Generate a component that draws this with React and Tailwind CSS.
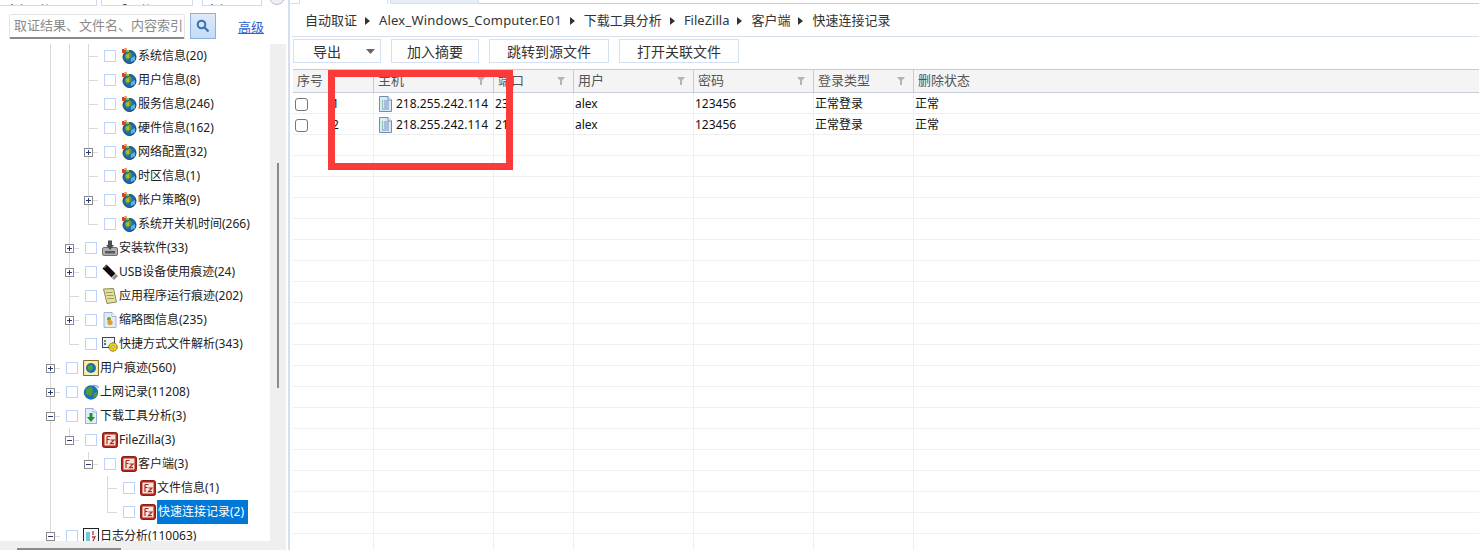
import React from "react";

const FONT = "font-['Noto_Sans','Noto_Sans_CJK_SC',sans-serif]";

function Globe() {
  return (
    <svg width="16" height="16" viewBox="0 0 16 16" className="shrink-0">
      <circle cx="8.5" cy="9" r="6.5" fill="#1f6bb0" stroke="#143f68" strokeWidth="1" />
      <path d="M4 7 L8 4 L11 6 L10 9 L7 12 L4 10 Z" fill="#4ea82c" />
      <path d="M10 10 L14 8 L14 12 L10 14 Z" fill="#5cb4ec" />
      <path d="M5 7 L8 6 L8 10 L6 10 Z" fill="#eda51f" />
      <rect x="1" y="1" width="4" height="4" fill="#d4452e" />
      <rect x="3" y="0" width="3" height="2" fill="#f0a080" />
      <rect x="5" y="2" width="3" height="2" fill="#7fc040" />
    </svg>
  );
}
function FileZilla() {
  return (
    <svg width="16" height="16" viewBox="0 0 16 16" className="shrink-0">
      <rect x="0.5" y="0.5" width="15" height="15" rx="2" fill="#b3261c" stroke="#8c1c14" />
      <rect x="2.5" y="2.5" width="11" height="11" fill="#f6e6de" />
      <path d="M5 4.5 H8.5 M5 4.5 V12 M5 7.5 H7.5 M8.5 8 H12 L8.5 11.7 H12" stroke="#b3261c" strokeWidth="1.2" fill="none" />
    </svg>
  );
}
function Install() {
  return (
    <svg width="16" height="16" viewBox="0 0 16 16" className="shrink-0">
      <rect x="0.5" y="7.5" width="15" height="8" rx="1.5" fill="#b0b0b0" stroke="#555" strokeWidth="0.8" />
      <rect x="3" y="11" width="10" height="2.5" fill="#5a5a5a" />
      <path d="M6 0.5 H10 V5 H12 L8 10 L4 5 H6 Z" fill="#4d4d4d" />
    </svg>
  );
}
function Usb() {
  return (
    <svg width="16" height="16" viewBox="0 0 16 16" className="shrink-0">
      <path d="M4.5 0.5 L0.5 4.5 L9.5 13.5 L13.5 9.5 Z" fill="#0c0c0c" />
      <path d="M10 14 L14 10 L16 12 L12 16 Z" fill="#8a8a8a" />
      <path d="M2 4 L5 1.8" stroke="#8a8a8a" strokeWidth="0.9" />
    </svg>
  );
}
function Note() {
  return (
    <svg width="16" height="16" viewBox="0 0 16 16" className="shrink-0">
      <path d="M1.5 1 L11.5 0.5 L14.5 14 L5 15.5 Z" fill="#e3e09a" stroke="#7c7c4a" strokeWidth="0.9" />
      <path d="M4 4.5 H10.5 M4.5 7.5 H11.5 M5.5 10.5 H12" stroke="#98985a" strokeWidth="0.9" />
    </svg>
  );
}
function Thumb() {
  return (
    <svg width="16" height="16" viewBox="0 0 16 16" className="shrink-0">
      <path d="M2 0.5 H10 L14 4.5 V15.5 H2 Z" fill="#e2eafa" stroke="#8fa6cc" strokeWidth="0.8" />
      <path d="M10 0.5 V4.5 H14" fill="#fff" stroke="#8fa6cc" strokeWidth="0.8" />
      <circle cx="7" cy="7" r="2" fill="#6fa82a" />
      <circle cx="8" cy="10.5" r="2.6" fill="#e0a030" />
    </svg>
  );
}
function Shortcut() {
  return (
    <svg width="16" height="16" viewBox="0 0 16 16" className="shrink-0">
      <rect x="0.5" y="1.5" width="12" height="10" fill="#eef3fa" stroke="#334" strokeWidth="0.9" />
      <rect x="2" y="4" width="2" height="2" fill="#50a050" />
      <rect x="2" y="7" width="2" height="2" fill="#4070c0" />
      <circle cx="11" cy="11" r="4.2" fill="#f2d400" stroke="#444" strokeWidth="0.8" strokeDasharray="2 0.6" />
      <circle cx="11" cy="11" r="1.3" fill="#fff" stroke="#555" strokeWidth="0.5" />
    </svg>
  );
}
function UserTrace() {
  return (
    <svg width="16" height="16" viewBox="0 0 16 16" className="shrink-0">
      <rect x="0.5" y="0.5" width="15" height="15" rx="1" fill="#f8f0b8" stroke="#8a6a20" strokeWidth="1.2" />
      <circle cx="8" cy="8" r="5" fill="#1f6fb0" />
      <path d="M5 6 L9 5 L10 8 L7 11 L5 9 Z" fill="#4fa434" />
    </svg>
  );
}
function WebGlobe() {
  return (
    <svg width="16" height="16" viewBox="0 0 16 16" className="shrink-0">
      <circle cx="8" cy="8.5" r="7.2" fill="#1f70bc" />
      <path d="M3 5 L8 2.5 L10 6 L8 12 L3 10 Z" fill="#4f9e32" />
      <path d="M10.5 9 L14.5 8 L13.5 12 L10.5 14 Z" fill="#4f9e32" />
      <path d="M10 1.5 Q14 1 15.5 4" stroke="#7aa8d8" strokeWidth="1.2" fill="none" />
    </svg>
  );
}
function Download() {
  return (
    <svg width="16" height="16" viewBox="0 0 16 16" className="shrink-0">
      <path d="M2.5 0.5 H10 L13.5 4 V15.5 H2.5 Z" fill="#e2ecfa" stroke="#8fa6cc" strokeWidth="0.9" />
      <path d="M10 0.5 V4 H13.5" fill="#fff" stroke="#8fa6cc" strokeWidth="0.8" />
      <path d="M6.5 5 H9.5 V9 H12 L8 14 L4 9 H6.5 Z" fill="#1a9628" />
    </svg>
  );
}
function LogIcon() {
  return (
    <svg width="16" height="16" viewBox="0 0 16 16" className="shrink-0">
      <rect x="0.5" y="0.5" width="15" height="15" fill="#f4f8ff" stroke="#222" />
      <rect x="3" y="4" width="4" height="9" fill="#70c8d8" />
      <path d="M10 3 V7 M9 9 H12 L10 13" stroke="#c03030" strokeWidth="1.3" fill="none" />
    </svg>
  );
}

const ICONS = {
  globe: Globe,
  fz: FileZilla,
  install: Install,
  usb: Usb,
  note: Note,
  thumb: Thumb,
  shortcut: Shortcut,
  user: UserTrace,
  web: WebGlobe,
  dl: Download,
  log: LogIcon,
};

/* one 19x24 connector cell of the tree: v = vertical line, t = tee, l = ell, n = nothing */
function Cell({ kind, box }) {
  const line = "#d9d9d9";
  return (
    <svg width="19" height="24" viewBox="0 0 19 24" className="shrink-0 block" shapeRendering="crispEdges">
      {(kind === "v" || kind === "t") && <path d="M9.5 0 V24" stroke={line} />}
      {kind === "l" && <path d="M9.5 0 V12.5" stroke={line} />}
      {(kind === "t" || kind === "l") && <path d="M9.5 12.5 H18.5" stroke={line} />}
      {box && (
        <g>
          <rect x="5.5" y="8.5" width="8" height="8" fill="#fff" stroke="#8a8a8a" />
          <path d="M7 12.5 H12" stroke="#2b3a78" />
          {box === "+" && <path d="M9.5 10 V15" stroke="#2b3a78" />}
        </g>
      )}
    </svg>
  );
}

const TREE = [
  { g: "vvt", icon: "globe", text: "系统信息(20)" },
  { g: "vvt", icon: "globe", text: "用户信息(8)" },
  { g: "vvt", icon: "globe", text: "服务信息(246)" },
  { g: "vvt", icon: "globe", text: "硬件信息(162)" },
  { g: "vvt", box: "+", icon: "globe", text: "网络配置(32)" },
  { g: "vvt", icon: "globe", text: "时区信息(1)" },
  { g: "vvt", box: "+", icon: "globe", text: "帐户策略(9)" },
  { g: "vvl", icon: "globe", text: "系统开关机时间(266)" },
  { g: "vt", box: "+", icon: "install", text: "安装软件(33)" },
  { g: "vt", box: "+", icon: "usb", text: "USB设备使用痕迹(24)" },
  { g: "vt", icon: "note", text: "应用程序运行痕迹(202)" },
  { g: "vt", box: "+", icon: "thumb", text: "缩略图信息(235)" },
  { g: "vl", icon: "shortcut", text: "快捷方式文件解析(343)" },
  { g: "t", box: "+", icon: "user", text: "用户痕迹(560)" },
  { g: "t", box: "+", icon: "web", text: "上网记录(11208)" },
  { g: "t", box: "-", icon: "dl", text: "下载工具分析(3)" },
  { g: "vl", box: "-", icon: "fz", text: "FileZilla(3)" },
  { g: "vnl", box: "-", icon: "fz", text: "客户端(3)" },
  { g: "vnnt", icon: "fz", text: "文件信息(1)" },
  { g: "vnnl", icon: "fz", text: "快速连接记录(2)", selected: true },
  { g: "t", box: "-", icon: "log", text: "日志分析(110063)" },
];

function TreeRow({ g, box, icon, text, selected }) {
  const Icon = ICONS[icon];
  const kinds = g.split("");
  return (
    <div className="flex h-6 items-center pl-[41px] shrink-0">
      {kinds.map((k, i) => (
        <Cell key={i} kind={k} box={i === kinds.length - 1 ? box : undefined} />
      ))}
      <span className="ml-[6px] h-3 w-3 shrink-0 border border-[#bdd3fb] bg-white" />
      <span className="ml-[5px] block h-4 w-4 shrink-0">
        <Icon />
      </span>
      {selected ? (
        <span className="ml-px h-6 bg-[#0078d7] pl-px pr-1 text-[12px] leading-6 whitespace-nowrap text-white">{text}</span>
      ) : (
        <span className="ml-px text-[12px] leading-6 whitespace-nowrap text-[#222]">{text}</span>
      )}
    </div>
  );
}

function Triangle() {
  return (
    <svg width="5" height="8" viewBox="0 0 5 8" className="ml-[8px] mr-[9px] shrink-0">
      <path d="M0 0 L5 4 L0 8 Z" fill="#333" />
    </svg>
  );
}

const CRUMBS = ["自动取证", "Alex_Windows_Computer.E01", "下载工具分析", "FileZilla", "客户端", "快速连接记录"];
const COLS = "grid grid-cols-[81px_120px_80px_120px_120px_100px_1fr]";

function Funnel() {
  return (
    <svg width="8" height="8" viewBox="0 0 8 8" className="mr-[8px] shrink-0">
      <path d="M0 0 H8 L5 3.5 V8 H3 V3.5 Z" fill="#b4b4b4" />
    </svg>
  );
}

function HeadCell({ label, filter, last }) {
  return (
    <div className={`flex h-full items-center justify-between pl-1 text-[13px] text-[#555] ${last ? "" : "border-r border-[#c8cbdc]"}`}>
      <span className="whitespace-nowrap">{label}</span>
      {filter && <Funnel />}
    </div>
  );
}

function FileIcon() {
  return (
    <svg width="13" height="16" viewBox="0 0 13 16" className="ml-[4px] mr-[4px] shrink-0">
      <path d="M0.5 0.5 H9 L12.5 4 V15.5 H0.5 Z" fill="#dbe8f6" stroke="#6f8fb0" />
      <path d="M9 0.5 V4 H12.5" fill="#fff" stroke="#6f8fb0" />
      <path d="M3 5 H4 M3 7 H4 M3 9 H4 M3 11 H4" stroke="#3aa05a" />
      <path d="M5 5 H10 M5 7 H10 M5 9 H10 M5 11 H10 M3 13 H10" stroke="#6f93bf" />
    </svg>
  );
}

function BodyCell({ children, last }) {
  return (
    <div className={`flex h-full items-center overflow-hidden pl-px pt-[2px] text-[12px] whitespace-nowrap text-[#111] ${last ? "" : "border-r border-[#efefef]"}`}>
      {children}
    </div>
  );
}

const DATA = [
  { n: "1", port: "23" },
  { n: "2", port: "21" },
];

function Btn({ w, children }) {
  return (
    <button className={`flex h-6 items-center justify-center border border-[#d5e0f0] bg-white text-[14px] text-[#333] ${w}`}>
      {children}
    </button>
  );
}

export default function App() {
  return (
    <div className={`relative flex h-[550px] w-[1479px] overflow-hidden bg-white ${FONT}`}>
      {/* left panel */}
      <div className="flex w-[288px] shrink-0 flex-col">
        {/* clipped top filter row */}
        <div className="flex h-[6px] shrink-0 overflow-hidden">
          <div className="flex h-[6px] w-[97px] items-end overflow-hidden border-r border-b border-[#cfdbef] pl-[6px]">
            <span className="mb-[-14px] text-[12px] leading-4 whitespace-nowrap text-[#222]">全部 时间</span>
          </div>
          <div className="ml-[4px] flex h-[6px] w-[92px] items-end overflow-hidden border-x border-b border-[#cfdbef] pl-[8px]">
            <span className="mb-[-14px] text-[12px] leading-4 whitespace-nowrap text-[#222]">不限时间</span>
          </div>
          <div className="ml-[9px] flex h-[6px] w-[60px] items-end overflow-hidden border-x border-b border-[#cfdbef] pl-[3px]">
            <span className="mb-[-14px] text-[12px] leading-4 whitespace-nowrap text-[#222]">全部</span>
          </div>
          <div className="ml-[7px] mt-[-11px] h-[16px] w-[16px] shrink-0 rounded-full border border-[#b8c0cc] bg-[#eef0f4]" />
        </div>
        {/* search row */}
        <div className="flex h-[38px] shrink-0 items-start pt-2">
          <div className="ml-[9px] flex h-[25px] w-[176px] items-center overflow-hidden rounded-[2px] border border-b-2 border-[#e4e4e4] border-b-[#8a8a8a] pl-[4px] text-[13px] whitespace-nowrap text-[#8a8a8a]">
            取证结果、文件名、内容索引
          </div>
          <div className="ml-[5px] mt-[-1px] flex h-[26px] w-[26px] items-center justify-center border border-[#8fb0d8] bg-gradient-to-b from-[#dceafb] to-[#c4dcf8]">
            <svg width="14" height="14" viewBox="0 0 14 14">
              <circle cx="5.5" cy="5.5" r="3.8" fill="none" stroke="#3f6ea8" strokeWidth="2" />
              <path d="M8.5 8.5 L12.5 12.5" stroke="#3f6ea8" strokeWidth="2.2" />
            </svg>
          </div>
          <a className="ml-[22px] mt-[1px] text-[13px] leading-6 text-[#2f62d0] underline">高级</a>
        </div>
        {/* tree + scrollbars */}
        <div className="flex min-h-0 flex-1 flex-col">
          <div className="flex min-h-0 flex-1 pr-[2px]">
            <div className="flex min-w-0 flex-1 flex-col overflow-hidden">
              {TREE.map((r) => (
                <TreeRow key={r.text} {...r} />
              ))}
            </div>
            <div className="flex w-4 shrink-0 flex-col bg-[#efefef] pt-[119px]">
              <div className="ml-[7px] h-[225px] w-[2px] bg-[#8a8a8a]" />
            </div>
          </div>
          <div className="mr-[2px] flex h-[9px] shrink-0 items-end bg-[#efefef]">
            <div className="ml-[17px] h-[2px] w-[104px] bg-[#8a8a8a]" />
          </div>
        </div>
      </div>
      <div className="w-[2px] shrink-0 bg-[#d5dff0]" />
      {/* right panel */}
      <div className="flex min-w-0 flex-1 flex-col">
        {/* tab strip */}
        <div className="flex h-[4px] shrink-0 overflow-hidden">
          <div className="w-[10px] border-r border-b border-[#d5dff0]" />
          <div className="w-[88px] border-r border-[#d5dff0]" />
          <div className="ml-[2px] w-[89px] border-x border-b border-[#d5dff0] bg-[#e8eef8]" />
          <div className="flex-1 border-b border-[#c8cbdc]" />
        </div>
        {/* breadcrumb */}
        <div className="ml-[2px] flex h-[33px] shrink-0 items-center border-b border-[#d5e0f0] pl-[13px] pt-[2px] text-[13px] text-[#333]">
          {CRUMBS.map((c, i) => (
            <React.Fragment key={c}>
              {i > 0 && <Triangle />}
              <span className={`whitespace-nowrap ${i === 1 ? "tracking-[0.2px]" : ""}`}>{c}</span>
            </React.Fragment>
          ))}
        </div>
        {/* toolbar */}
        <div className="ml-[3px] mt-[2px] flex h-6 shrink-0 gap-[10px]">
          <Btn w="w-[88px]">
            <span className="ml-[2px] mr-[25px]">导出</span>
            <svg width="9" height="5" viewBox="0 0 9 5" className="mr-[-12px]">
              <path d="M0 0 H9 L4.5 5 Z" fill="#666" />
            </svg>
          </Btn>
          <Btn w="w-[88px]">加入摘要</Btn>
          <Btn w="w-[120px]">跳转到源文件</Btn>
          <Btn w="w-[120px]">打开关联文件</Btn>
        </div>
        {/* table */}
        <div className="ml-[3px] mt-[6px] flex min-h-0 flex-1 flex-col overflow-hidden">
          <div className={`${COLS} h-[24px] shrink-0 border-y border-[#c8cbdc] bg-[#f4f4f4]`}>
            <HeadCell label="序号" />
            <HeadCell label="主机" filter />
            <HeadCell label="端口" filter />
            <HeadCell label="用户" filter />
            <HeadCell label="密码" filter />
            <HeadCell label="登录类型" filter />
            <HeadCell label="删除状态" last />
          </div>
          {Array.from({ length: 22 }).map((_, i) => {
            const d = DATA[i];
            return (
              <div key={i} className={`${COLS} h-[21px] shrink-0 border-b border-[#efefef]`}>
                <BodyCell>
                  {d && (
                    <>
                      <span className="ml-[1px] h-[13px] w-[13px] shrink-0 rounded-[3px] border border-[#767676] bg-white" />
                      <span className="ml-[24px]">{d.n}</span>
                    </>
                  )}
                </BodyCell>
                <BodyCell>
                  {d && (
                    <>
                      <FileIcon />
                      218.255.242.114
                    </>
                  )}
                </BodyCell>
                <BodyCell>{d && d.port}</BodyCell>
                <BodyCell>{d && "alex"}</BodyCell>
                <BodyCell>{d && "123456"}</BodyCell>
                <BodyCell>{d && "正常登录"}</BodyCell>
                <BodyCell last>{d && "正常"}</BodyCell>
              </div>
            );
          })}
        </div>
      </div>
      {/* red annotation drawn over the screenshot */}
      <div className="absolute left-[328px] top-[70px] h-[100px] w-[185px] border-[7px] border-[#fb3a3a]" />
    </div>
  );
}
